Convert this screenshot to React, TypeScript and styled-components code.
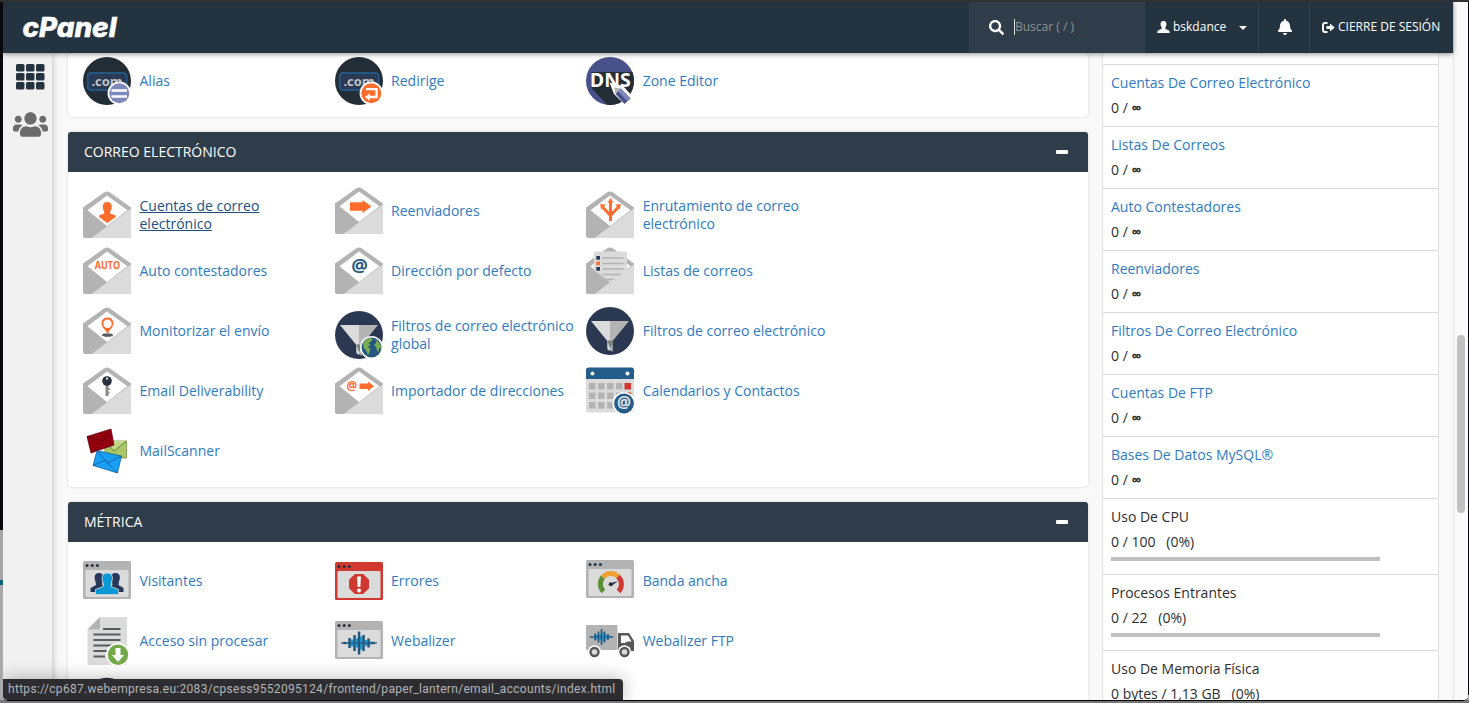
import React from 'react';
import styled, { createGlobalStyle } from 'styled-components';
import { FaSearch, FaBell, FaUsers } from 'react-icons/fa';

const GlobalStyle = createGlobalStyle`
  * { box-sizing: border-box; }
  body { margin: 0; background: #000; font-family: 'Open Sans', 'Noto Sans', sans-serif; font-size: 14px; line-height: 18px; color: #333; overflow: hidden; }
  svg { display: block; flex: none; }
`;

const Desktop = styled.div`
  height: 703px;
  width: 1469px;
  padding: 2px 1px 2px 3px;
  background: linear-gradient(#323232 0 2px, transparent 2px), linear-gradient(90deg, transparent 1400px, #07090d 1400px) 0 0 / 100% 695px no-repeat, linear-gradient(#07090d 0 530px, #a5a5a5 530px 580px, #0a6076 580px 585px, #a9a9a9 585px 700px, #777 700px);
  display: flex;
`;
const Window = styled.div`
  flex: 1;
  display: flex;
  background: #f9f9f9;
  border-bottom: 1px solid #000;
  border-radius: 0 0 5px 5px;
  overflow: hidden;
  position: relative;
`;
const Page = styled.div`
  width: 1450px;
  display: flex;
  flex-direction: column;
`;
const Header = styled.header`
  height: 51px;
  flex: none;
  display: flex;
  background: #243340;
  color: #fff;
  box-shadow: 0 1px 5px rgba(0, 0, 0, 0.45);
  position: relative;
  z-index: 2;
`;
const Brand = styled.div`
  flex: 1;
  padding: 8px 0 0 17px;
`;
const HeaderCell = styled.div<{ $w: number; $pad: number }>`
  width: ${(p) => p.$w}px;
  padding-left: ${(p) => p.$pad}px;
  padding-bottom: 1px;
  border-left: 1px solid #33424f;
  display: flex;
  align-items: center;
  font-size: 12px;
  white-space: nowrap;
`;
const SearchCell = styled(HeaderCell)`
  background: #2f3c49;
  color: #fff;
`;
const Placeholder = styled.span`
  margin-left: 10px;
  border-left: 1px solid #ddd;
  color: #939393;
  line-height: 16px;
  font-size: 12px;
`;
const CellText = styled.span`
  margin-left: 3px;
`;
const Caret = styled.span`
  margin: 2px 0 0 13px;
  border: 4px solid transparent;
  border-top-color: #fff;
  border-bottom: 0;
`;
const Body = styled.div`
  flex: 1;
  min-height: 0;
  display: flex;
`;
const Nav = styled.nav`
  width: 49px;
  background: #f1f1f1;
  box-shadow: 0 0 7px rgba(0, 0, 0, 0.28);
  display: flex;
  flex-direction: column;
  align-items: center;
  padding: 11px 0 0 6px;
  gap: 17px;
  color: #6b6b6b;
`;
const Main = styled.main`
  width: 1020px;
  margin-left: 16px;
  display: flex;
  flex-direction: column;
  gap: 15px;
  overflow: visible;
`;
const Panel = styled.section`
  flex: none;
  background: #fff;
  border-radius: 4px;
  box-shadow: 0 0 2px rgba(0, 0, 0, 0.22);
`;
const PanelHead = styled.h2`
  margin: 0;
  height: 40px;
  padding: 0 20px 1px 16px;
  display: flex;
  align-items: center;
  justify-content: space-between;
  background: #2f3c4a;
  color: #fff;
  border-radius: 3px 3px 0 0;
  font-size: 14px;
  font-weight: 400;
`;
const Minus = styled.span`
  width: 12px;
  height: 4px;
  border-radius: 1px;
  background: #fff;
`;
const ItemGrid = styled.div<{ $top: number }>`
  display: grid;
  grid-template-columns: repeat(3, 251.6px);
  grid-auto-rows: 60px;
  padding: ${(p) => p.$top}px 15px 0;
`;
const Item = styled.div`
  display: flex;
  align-items: center;
  align-self: start;
  min-height: 48px;
`;
const Label = styled.a<{ $active?: boolean }>`
  margin-left: 8.5px;
  width: 185px;
  padding: 10px 0;
  color: ${(p) => (p.$active ? '#1d4f80' : '#2f7bbf')};
  text-decoration: ${(p) => (p.$active ? 'underline' : 'none')};
`;
const Stats = styled.aside`
  width: 337px;
  margin-left: 14px;
  background: #fff;
  border: solid #e2e2e2;
  border-width: 0 1px;
  overflow: hidden;
`;
const Stat = styled.div<{ $bar?: boolean }>`
  height: ${(p) => (p.$bar ? 76 : 62)}px;
  padding: 9px 8px 0;
  border-bottom: 1px solid #d8d8d8;
  display: flex;
  flex-direction: column;
  gap: 7px;
`;
const StatStub = styled.div`
  height: 12px;
  border-bottom: 1px solid #d8d8d8;
`;
const StatName = styled.span<{ $link?: boolean }>`
  color: ${(p) => (p.$link ? '#2f7bbf' : '#2e2e2e')};
`;
const StatValue = styled.span`
  color: #2e2e2e;
  white-space: pre;
`;
const Unlimited = styled.b`
  font-weight: 700;
`;
const Meter = styled.div`
  width: 269px;
  height: 4px;
  margin-top: -1px;
  background: #c0c0c0;
`;
const Track = styled.div`
  flex: 1;
  border-left: 1px solid #e7e7e7;
  background: #fafafa;
  padding: 333px 0 0 3px;
`;
const Thumb = styled.div`
  width: 8px;
  height: 178px;
  border-radius: 4px;
  background: #c1c1c1;
`;
const StatusBar = styled.div`
  position: absolute;
  left: 0;
  bottom: 0;
  width: 620px;
  height: 21px;
  padding-left: 5px;
  background: #2d2d31;
  color: #b4b4b6;
  border-radius: 0 4px 0 0;
  box-shadow: 0 0 18px rgba(0, 0, 0, 0.3);
  font: 12px/21px Roboto, sans-serif;
  letter-spacing: 0.3px;
  white-space: nowrap;
  z-index: 3;
`;

const O = '#ff6c2c';
const NAVY = '#2b3a54';
const SANS = "'Open Sans', sans-serif";

const Icon = ({ children }: { children: React.ReactNode }) => (
  <svg width="48" height="48" viewBox="0 0 48 48">{children}</svg>
);

const Envelope = ({ children, list }: { children?: React.ReactNode; list?: boolean }) => (
  <Icon>
    <path d="M0 16.5 21 1.5Q24-.6 27 1.5L48 16.5V45.500Q48 47 46.500 47H2Q0 47 0 45Z" fill="#b3b3b3" />
    <path d="M24 4.500 44.500 19.300 24 35 4.500 19.300Z" fill="#fff" />
    {!list && children}
    {list && <>{children}<path d="M0 17 24 35.200 9 47H2Q0 47 0 45Z" fill="#b3b3b3" /></>}
    <path d="M48 17.500V45.500Q48 47 46.500 47H8.500Z" fill="#dbdbdb" />
  </Icon>
);

const ComIcon = ({ children }: { children: React.ReactNode }) => (
  <Icon>
    <circle cx="24" cy="24" r="24" fill="#232d36" />
    <rect x="4.700" y="16" width="39" height="17" rx="3.500" fill={NAVY} stroke="#245682" strokeWidth="2" />
    <text x="24" y="28.500" textAnchor="middle" fontFamily={SANS} fontWeight="700" fontSize="13" fill="#c2c2c2">.com</text>
    {children}
  </Icon>
);

const FunnelIcon = ({ globe }: { globe?: boolean }) => (
  <Icon>
    <circle cx="24" cy="24" r="24" fill="#2b3852" />
    <path d="M5 14H24V44L21.300 42V34Z" fill="#dbdbdb" />
    <path d="M24 14H43L26.700 34V45L24 43Z" fill="#b3b3b3" />
    <path d="M21.300 33.500H26.700V36L24 41Z" fill="#777f7b" />
    {globe && (
      <>
        <circle cx="36.500" cy="36.500" r="11.500" fill="#fff" />
        <circle cx="36.500" cy="36.500" r="10" fill="#245682" />
        <path d="M28 32Q30 28.500 34 27L38 28 36 30.500 33.500 32 35.500 34.500 32.500 35.500 35.500 38 34.500 41 33 44.500 31.500 40 28.500 36.500ZM40 28.500Q46 31.500 46.300 37L44 37.500 43.500 41 41.500 39 41.500 36.500 39 34 41.500 31.500Z" fill="#79ad4f" />
      </>
    )}
  </Icon>
);

const BrowserFrame = ({ y, red, children }: { y: number; red?: boolean; children: React.ReactNode }) => (
  <Icon>
    <g transform={`translate(0 ${y})`}>
      <rect width="48" height="38" rx="1.500" fill={red ? '#d13830' : '#b3b3b3'} />
      <rect x="2.500" y="9" width="43" height="27" rx="1" fill="#dbdbdb" />
      {[4, 9.200, 14.400].map((x) => <circle key={x} cx={x} cy="4.500" r="1.500" fill="#27323b" />)}
      {children}
    </g>
  </Icon>
);

const WAVE = [[-14.500, 1.200], [-12, 0.800], [-9.500, 5], [-7, 3.500], [-4.500, 8], [-2.200, 4.500], [0, 11.500], [2.200, 6.500], [4.500, 8], [7, 3], [9.500, 4.500], [12, 1.500], [14.500, 1.200]];
const Wave = ({ x, y, s = 1 }: { x: number; y: number; s?: number }) => (
  <g transform={`translate(${x} ${y}) scale(${s})`}>
    {WAVE.map(([dx, h], i) => <rect key={dx} x={dx - 1.200} y={-h} width="2.500" height={h * 2} fill={i % 2 ? '#1c95cf' : '#21567f'} />)}
    <rect x="-18" y="-0.600" width="36" height="1.200" fill="#21567f" />
  </g>
);

const ICONS: Record<string, React.ReactNode> = {
  alias: (
    <ComIcon>
      <circle cx="36.300" cy="36.300" r="11.700" fill="#fff" />
      <circle cx="36.300" cy="36.300" r="10" fill="#7f87bb" />
      <path d="M28.500 33.500H44M28.500 39.500H44" stroke="#fff" strokeWidth="2.600" />
    </ComIcon>
  ),
  redirect: (
    <ComIcon>
      <circle cx="36.300" cy="36.300" r="11.700" fill="#fff" />
      <circle cx="36.300" cy="36.300" r="10" fill={O} />
      <path d="M31 32.200H41.500V40H34" stroke="#fff" strokeWidth="2.300" fill="none" />
      <path d="M30 40 35 36.300V43.700Z" fill="#fff" />
    </ComIcon>
  ),
  dns: (
    <Icon>
      <circle cx="24" cy="24" r="24" fill="#485189" />
      <path d="M5 30.500V15H46.500Q51 29 42 40 33 49 21 47.800Z" fill="#232d36" />
      <text x="3.800" y="29.500" textLength="41" lengthAdjust="spacingAndGlyphs" fontFamily={SANS} fontWeight="700" fontSize="20" fill="#fff">DNS</text>
      <path d="M23.500 25.500 37 29 48 41 39.500 48.500 28 37Z" fill="#fff" />
      <path d="M28 30.500 35 31.500 29.500 37Z" fill="#b3b3b3" />
      <path d="M35 31.500 44.500 41.500 38.500 47 29.500 37Z" fill="#485189" />
      <path d="M35 31.500 44.500 41.500 41.500 44.300 32 34.200Z" fill="#7f87bb" />
    </Icon>
  ),
  accounts: (
    <Envelope>
      <path d="M24.200 11C28.700 11 29 14.500 28.500 17.500 28 20 26.800 20.500 27.200 22.500L32.800 24.500V26L24.200 32 16 26V24.500L21.200 22.500C21.600 20.500 20.400 20 20 17.500 19.500 14.500 19.800 11 24.200 11Z" fill={O} />
    </Envelope>
  ),
  forward: <Envelope><path d="M15 15.300H27.500V13L36.500 19.500 27.500 26V23.700H15Z" fill={O} /></Envelope>,
  routing: (
    <Envelope>
      <path d="M24.500 30V11M24.500 24.500 17 16.500M24.500 24.500 32 16.500" stroke={O} strokeWidth="3" fill="none" />
      <path d="M24.500 7 27.500 11.500H21.500ZM14.200 13 20 13.800 15 18.600ZM34.800 13 29 13.800 34 18.600Z" fill={O} />
    </Envelope>
  ),
  auto: (
    <Envelope>
      <text x="11.800" y="22.300" textLength="25.200" lengthAdjust="spacingAndGlyphs" fontFamily={SANS} fontWeight="700" fontSize="10" fill={O}>AUTO</text>
    </Envelope>
  ),
  at: <Envelope><text x="24.500" y="24.500" textAnchor="middle" fontFamily={SANS} fontWeight="700" fontSize="18.500" fill="#245682">@</text></Envelope>,
  lists: (
    <Envelope list>
      <path d="M5 20 9 17V21ZM43 20 39 17V21Z" fill="#fff" />
      <rect x="8" y="4.500" width="33" height="37" rx="1.500" fill="#dbdbdb" />
      {[11, 16.500, 22].map((y, i) => (
        <g key={y}>
          <rect x="10.300" y={y - 2} width="3.700" height="3.700" fill={i === 1 ? O : NAVY} />
          <rect x="16" y={y - 0.800} width="22" height="1.600" rx="0.800" fill="#b3b3b3" />
        </g>
      ))}
      <path d="M16 27.500H36M20 32.500H31" stroke="#b3b3b3" strokeWidth="1.600" />
    </Envelope>
  ),
  track: (
    <Envelope>
      <ellipse cx="24.500" cy="28" rx="5.500" ry="1.800" fill="#565b5e" />
      <path d="M24.500 28.500C24 24.500 21.500 23 19.800 20.300 16.800 15.500 19.500 10.500 24.500 10.500S32.200 15.500 29.200 20.300C27.500 23 25 24.500 24.500 28.500Z" fill={O} />
      <circle cx="24.500" cy="16.800" r="4.200" fill="#fff" />
    </Envelope>
  ),
  globalFilter: <FunnelIcon globe />,
  filter: <FunnelIcon />,
  key: (
    <Envelope>
      <rect x="22.500" y="17" width="3" height="12" fill="#8a8a8a" />
      <path d="M25.500 21H27V23H25.500ZM25.500 25H26.500V27H25.500Z" fill="#8a8a8a" />
      <circle cx="24" cy="14" r="4.800" fill="#27323b" />
      <circle cx="24" cy="11.600" r="1.100" fill="#fff" />
    </Envelope>
  ),
  importer: (
    <Envelope>
      <text x="17" y="22.500" textAnchor="middle" fontFamily={SANS} fontWeight="700" fontSize="12" fill={O}>@</text>
      <path d="M24.500 16.500H33V14.500L39 19.200 33 24V22H24.500Z" fill={O} />
    </Envelope>
  ),
  calendar: (
    <Icon>
      <path d="M0 11H48V43Q48 45.500 45.500 45.500H2.500Q0 45.500 0 43Z" fill="#dbdbdb" />
      <path d="M0 12V3Q0 .5 2.500.5H45.500Q48 .5 48 3V12Z" fill="#245c8a" />
      <circle cx="6.500" cy="6.500" r="2" fill="#fff" /><circle cx="41.500" cy="6.500" r="2" fill="#fff" />
      {[16, 25.500, 35].map((y) => [3, 12, 21, 30, 38.500].map((x) => (
        <rect key={`${x}-${y}`} x={x} y={y} width="6.500" height="6.500" fill={x > 38 && y < 30 ? '#d13830' : '#b3b3b3'} />
      )))}
      <circle cx="38" cy="36.500" r="11.500" fill="#fff" />
      <circle cx="38" cy="36.500" r="9.900" fill="#245c8a" />
      <text x="38" y="41" textAnchor="middle" fontFamily={SANS} fontWeight="700" fontSize="15.500" fill="#e4e4e4">@</text>
    </Icon>
  ),
  scanner: (
    <Icon>
      <g stroke="#6d7f35" strokeWidth="0.700"><path d="M22 14H43.500V31H22Z" fill="#abc765" /><path d="M22 14 31 24 43.500 14" fill="#c3d987" stroke="#2c6b22" /></g>
      <g stroke="#5c000b" strokeWidth="0.700"><path d="M4 9.500 28 2 31 18 8 26Z" fill="#92000f" /><path d="M4 9.500 20 14 28 2" fill="none" /></g>
      <g stroke="#135284" strokeWidth="0.700"><path d="M14 23.500 38.500 29 34.500 46 10 38.500Z" fill="#17a0f5" /><path d="M10 38.500 22 33 34.500 46M14 23.500 24.500 36 38.500 29" fill="none" /></g>
    </Icon>
  ),
  visitors: (
    <BrowserFrame y={4}>
      {[16, 32.500].map((x) => <path key={x} d={`M${x} 12C${x - 5} 12 ${x - 5} 17 ${x - 3.500} 20.500L${x - 3} 24 ${x - 8.500} 27V31H${x + 8}V27L${x + 3} 24 ${x + 3.500} 20.500C${x + 5} 17 ${x + 5} 12 ${x} 12Z`} fill="#27385a" />)}
      <path d="M24.300 12C29.500 12 30.500 17 28.500 21.500L28 25.500 35.500 28.500V33.500H12.500V28.500L20.500 25.500 20 21.500C18 17 19 12 24.300 12Z" fill="#0a98d6" stroke="#dbdbdb" strokeWidth="0.800" />
    </BrowserFrame>
  ),
  errors: (
    <BrowserFrame y={5} red>
      <path d="M19.800 12H28.200L34 17.800V26.200L28.200 32H19.800L14 26.200V17.800Z" fill="#d13830" />
      <path d="M22 14.500H26L25.300 25H22.700Z" fill="#fff" /><circle cx="24" cy="28.500" r="2" fill="#fff" />
    </BrowserFrame>
  ),
  bandwidth: (
    <BrowserFrame y={3}>
      <g fill="none" strokeWidth="5">
        <path d="M17.500 31.500A10.500 10.500 0 0 1 17 17" stroke="#5c9139" />
        <path d="M17 17A10.500 10.500 0 0 1 32 16.500" stroke="#f1a233" />
        <path d="M32 16.500A10.500 10.500 0 0 1 32.500 31.500" stroke="#d13830" />
      </g>
      <path d="M23.500 23.500 32 21 25.500 26Z" fill="#27323b" /><circle cx="24.700" cy="24.300" r="2" fill="#27323b" />
    </BrowserFrame>
  ),
  raw: (
    <Icon>
      <path d="M17 0H42.500Q44 0 44 1.500V48H6Q4.500 48 4.500 46V12.500Z" fill="#dbdbdb" />
      <path d="M17 0V10.500Q17 12.500 15 12.500H4.500Z" fill="#b3b3b3" />
      <path d="M20 12H37.500M10.500 17.500H37.500M10.500 23H37.500M10.500 28.500H37.500M10.500 34H27M10.500 39.500H22" stroke="#575c5f" strokeWidth="1.800" />
      <circle cx="35" cy="37.800" r="12" fill="#fff" /><circle cx="35" cy="37.800" r="10.200" fill="#74ab4a" />
      <path d="M32.500 31H37.500V38H41L35 45 29 38H32.500Z" fill="#fff" />
    </Icon>
  ),
  webalizer: <BrowserFrame y={4}><Wave x={24} y={22} /></BrowserFrame>,
  webalizerFtp: (
    <Icon>
      <rect y="8" width="31.500" height="25" rx="1" fill="#b3b3b3" />
      <Wave x={15.500} y={20} s={0.68} />
      <path d="M32 16H43L48 24V34H32Z" fill="#575757" /><path d="M35 18.500H42L45.500 24.500H41L39 26H35Z" fill="#fff" />
      {[8.500, 38.500].map((x) => <g key={x}><circle cx={x} cy="35" r="6.800" fill="#fff" /><circle cx={x} cy="35" r="4" fill="#dbdbdb" stroke="#575757" strokeWidth="2.400" /></g>)}
    </Icon>
  ),
  clipped: <Icon><circle cx="24" cy="24.700" r="24" fill="#232d36" /></Icon>,
};

type Entry = [string, string, boolean?];
const DOMAINS: Entry[] = [['alias', 'Alias'], ['redirect', 'Redirige'], ['dns', 'Zone Editor']];
const EMAIL: Entry[] = [
  ['accounts', 'Cuentas de correo electrónico', true], ['forward', 'Reenviadores'], ['routing', 'Enrutamiento de correo electrónico'],
  ['auto', 'Auto contestadores'], ['at', 'Dirección por defecto'], ['lists', 'Listas de correos'],
  ['track', 'Monitorizar el envío'], ['globalFilter', 'Filtros de correo electrónico global'], ['filter', 'Filtros de correo electrónico'],
  ['key', 'Email Deliverability'], ['importer', 'Importador de direcciones'], ['calendar', 'Calendarios y Contactos'],
  ['scanner', 'MailScanner'],
];
const METRICS: Entry[] = [
  ['visitors', 'Visitantes'], ['errors', 'Errores'], ['bandwidth', 'Banda ancha'],
  ['raw', 'Acceso sin procesar'], ['webalizer', 'Webalizer'], ['webalizerFtp', 'Webalizer FTP'], ['clipped', ''],
];
const COUNTS = ['Cuentas De Correo Electrónico', 'Listas De Correos', 'Auto Contestadores', 'Reenviadores', 'Filtros De Correo Electrónico', 'Cuentas De FTP', 'Bases De Datos MySQL®'];
const USAGE = [['Uso De CPU', '0 / 100   (0%)'], ['Procesos Entrantes', '0 / 22   (0%)'], ['Uso De Memoria Física', '0 bytes / 1,13 GB   (0%)']];

const Group = ({ title, entries }: { title?: string; entries: Entry[] }) => (
  <Panel>
    {title && <PanelHead>{title}<Minus /></PanelHead>}
    <ItemGrid $top={title ? 15 : 4}>
      {entries.map(([icon, label, active]) => (
        <Item key={icon}>{ICONS[icon]}{label && <Label $active={active}>{label}</Label>}</Item>
      ))}
    </ItemGrid>
  </Panel>
);

export default function App() {
  return (
    <Desktop>
      <GlobalStyle />
      <Window>
        <Page>
          <Header>
            <Brand>
              <svg width="110" height="36" viewBox="0 0 110 36">
                <text x="2.500" y="26.800" textLength="94" lengthAdjust="spacingAndGlyphs" fontFamily="Inter, sans-serif" fontStyle="italic" fontWeight="800" fontSize="26.500" fill="#fff" stroke="#fff" strokeWidth="0.500">cPanel</text>
              </svg>
            </Brand>
            <SearchCell $w={175} $pad={19}><FaSearch size={15} /><Placeholder>Buscar ( / )</Placeholder></SearchCell>
            <HeaderCell $w={114} $pad={12}>
              <svg width="13" height="12" viewBox="0 0 13 12"><path d="M6.500 0C9 0 9.700 1.700 9.400 4 9.200 5.500 8 6 8.300 7.800L12 9.400Q12.800 10 12.800 12H.2Q.2 10 1 9.400L4.700 7.800C5 6 3.800 5.500 3.600 4 3.300 1.700 4 0 6.500 0Z" fill="#fff" /></svg>
              <CellText>bskdance</CellText><Caret />
            </HeaderCell>
            <HeaderCell $w={51} $pad={18}><FaBell size={16} /></HeaderCell>
            <HeaderCell $w={144} $pad={12}>
              <svg width="13" height="11" viewBox="0 0 13 11"><path d="M5.500 1H3Q1 1 1 3V8Q1 10 3 10H5.500" stroke="#fff" strokeWidth="1.900" fill="none" /><path d="M4.500 4H8V1.500L12.700 5.500 8 9.500V7H4.500Z" fill="#fff" /></svg>
              <CellText>CIERRE DE SESIÓN</CellText>
            </HeaderCell>
          </Header>
          <Body>
            <Nav>
              <svg width="29" height="26" viewBox="0 0 29 26">
                {[0, 9, 18].map((y) => [0, 10, 20].map((x) => <rect key={`${x}${y}`} x={x} y={y} width="8.500" height="7.500" rx="1.500" fill="#243340" />))}
              </svg>
              <FaUsers size={35} />
            </Nav>
            <Main>
              <Group entries={DOMAINS} />
              <Group title="CORREO ELECTRÓNICO" entries={EMAIL} />
              <Group title="MÉTRICA" entries={METRICS} />
            </Main>
            <Stats>
              <StatStub />
              {COUNTS.map((name) => <Stat key={name}><StatName $link>{name}</StatName><StatValue>0 / <Unlimited>∞</Unlimited></StatValue></Stat>)}
              {USAGE.map(([name, value]) => <Stat $bar key={name}><StatName>{name}</StatName><StatValue>{value}</StatValue><Meter /></Stat>)}
            </Stats>
          </Body>
        </Page>
        <Track><Thumb /></Track>
        <StatusBar>https://cp687.webempresa.eu:2083/cpsess9552095124/frontend/paper_lantern/email_accounts/index.html</StatusBar>
      </Window>
    </Desktop>
  );
}
